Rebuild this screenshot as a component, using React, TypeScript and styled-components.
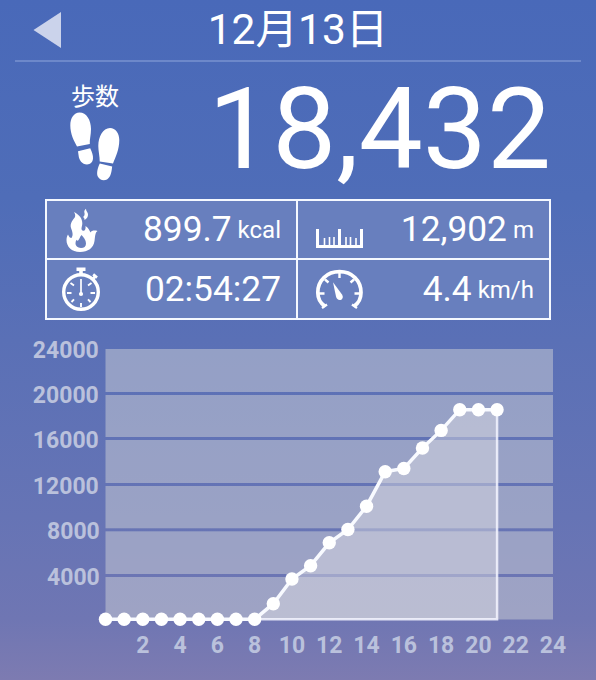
import React from 'react';
import styled, { createGlobalStyle } from 'styled-components';

const GlobalStyle = createGlobalStyle`
  * { box-sizing: border-box; }
  body { margin: 0; }
`;

const Screen = styled.main`
  width: 596px;
  height: 680px;
  overflow: hidden;
  color: #fff;
  font-family: Roboto, 'Noto Sans CJK JP', sans-serif;
  background: linear-gradient(180deg, #4969b9 0%, #4f6db8 29%, #5a70b6 50%, #6674b5 76%, #6f76b3 91%, #7d7bb1 100%);
`;

const Header = styled.header`
  display: grid;
  grid-template-columns: 64px 1fr 64px;
  align-items: center;
  height: 62px;
  margin: 0 15px;
  border-bottom: 2px solid #6d88ca;
`;

const BackButton = styled.button`
  display: flex;
  padding: 0 0 0 18px;
  border: 0;
  background: none;
`;

const Title = styled.h1`
  margin: 0;
  font-size: 42.5px;
  line-height: 60px;
  font-weight: 400;
  text-align: center;
  white-space: nowrap;
`;

const Summary = styled.section`
  display: flex;
  justify-content: space-between;
  height: 137px;
  padding: 0 45px 0 70px;
`;

const StepsBadge = styled.div`
  display: flex;
  flex-direction: column;
  width: 50px;
  padding-top: 21px;
`;

const StepsLabel = styled.span`
  padding-left: 1px;
  font-size: 24px;
  line-height: 29px;
  white-space: nowrap;
`;

const StepsCount = styled.div`
  font-size: 114px;
  line-height: 135px;
`;

const Stats = styled.section`
  display: grid;
  grid-template-columns: 249px 251px;
  grid-template-rows: 57px 58px;
  gap: 2px;
  width: 506px;
  height: 121px;
  margin-left: 45px;
  padding: 2px;
  background: #f4f8ff;
`;

const Stat = styled.div`
  display: flex;
  align-items: center;
  justify-content: space-between;
  padding: 0 15px 0 14px;
  background: #687fbe;

  &:nth-child(even) {
    padding-left: 17px;
  }
`;

const Reading = styled.div`
  display: flex;
  align-items: baseline;
  gap: 6px;
  white-space: nowrap;
`;

const Value = styled.span`
  font-size: 35.3px;
  line-height: 57px;
`;

const Unit = styled.span`
  font-size: 24px;
  position: relative;
  top: -3px;
`;

const ChartArea = styled.svg`
  display: block;
  width: 596px;
  height: 360px;
  font-family: Roboto, sans-serif;
`;

const AxisLabel = styled.text`
  fill: #bac1dc;
  font-size: 23px;
  font-weight: 700;
`;

const Footprints = () => (
  <svg width="51" height="70" viewBox="70 112 51 70" fill="#fff">
    <path d="M77 146.500C74 141 70.300 134 70.300 125.500C70.300 118 74 112.500 79.500 112.500C86.500 112.500 91 120 91 129C91 135 89.500 139 89.800 144Z" />
    <path d="M78 151.200L90.200 148.200C92 152 93.300 155.500 93 158.500C92.700 162 90.500 164.300 87 164.500C82 164.500 79 160 78.600 155.500Z" />
    <path d="M99.700 161.500C99.800 156.500 98.300 151 98.300 146C98.300 136.500 103 128 110 128C115.500 128 119.300 133 119.300 140C119.300 149.500 115.500 157 113 163.500Z" />
    <path d="M99.800 163.400L112.200 166.500C111.500 171.500 111.200 176.500 107 179.500C103.500 181.200 99.500 180 97.800 176.500C96.200 173 97.800 167.500 99.800 163.400Z" />
  </svg>
);

const Flame = () => (
  <svg width="40" height="46" viewBox="61 207 40 46">
    <path fill="#fff" d="M74 212C79 214.500 82.500 218.500 82.300 223.500C82.200 227 80.500 229 82.500 230.500C84.500 231.500 86 229.500 85.500 226C88.500 228 89.500 230.500 90.500 232.500C91.500 230.500 94.500 230 97.500 231C95 232.500 95.200 236.500 94.500 241C93.500 248 88 252 80 252C71.500 252 66.500 246.500 66.500 240C66.500 238 67 236 68 234.500C69 237 70 238 71.500 238C73.500 235 72.500 232 71 228C69.500 223 73.500 219.500 75 217C75.500 215 75 213.500 74 212ZM83 217C84.500 216 84.800 214.500 84.500 213C83.900 211.500 84.400 209.700 86 208.700C85.800 211 87.800 212 88 214C88.300 217 86.500 219 84.500 220C84.700 218.500 84 217.500 83 217Z" />
    <path fill="#687fbe" d="M81.500 235C83.500 237 86 240 86 243.500C86 246.500 84 248 81 248C77.500 248 75.500 245.800 75.500 243.300C75.500 242 75.800 240.800 76.500 239.800C77.500 241 78 240.800 78.500 240C80 238.500 79.500 237 81.500 235Z" />
  </svg>
);

const Stopwatch = () => (
  <svg width="40" height="46" viewBox="61 266 40 46" stroke="#fff" fill="none">
    <circle cx="81" cy="292" r="17.300" strokeWidth="3.400" />
    <path d="M76.500 269.300H85.500M81 270V276" strokeWidth="3.600" />
    <path d="M92 280L95 276.500M93.200 274.400L97 277.600" strokeWidth="2.700" />
    <path d="M81 279V293" strokeWidth="1.700" />
    <path d="M67 293H71.500M90.500 293H95M70.500 283L74 285.500M91.500 283L88 285.500M71.500 302L74 299.300M90.500 302L88 299.300M81 303V307" strokeWidth="1.900" />
    <circle cx="81" cy="294" r="2.100" fill="#fff" stroke="none" />
  </svg>
);

const Ruler = () => (
  <svg width="50" height="40" viewBox="315 210 50 40" stroke="#fff" fill="none">
    <path d="M317.500 229V246.500H361.500V229M339.500 229V247" strokeWidth="3" />
    <path d="M324.500 238V246M329.500 237V246M334 237V246M346 237V246M350.500 237V246M356 238V246" strokeWidth="1.600" />
  </svg>
);

const Gauge = () => (
  <svg width="50" height="46" viewBox="315 266 50 46" stroke="#fff" fill="none">
    <path d="M325 306.200C320 303 317.800 298.500 317.800 292.500C317.800 280.500 327 271.700 339.500 271.700C352 271.700 361 280.500 361 292.500C361 298.500 359 303 354 306.200" strokeWidth="3.700" />
    <path d="M322 308L327 304.500M357 308L352 304.500" strokeWidth="2.400" />
    <path d="M339.500 273V278M319 293.500H324.500M354.500 293.500H360M325 279.500L328.500 282.500M354 279.500L350.500 282.500" strokeWidth="2.400" />
    <path d="M333 282.300L342 294.500C343.500 297 342.700 299.300 340.500 300C338.300 300.500 336.600 298.800 336 296.500Z" fill="#fff" stroke="none" />
  </svg>
);

const LEFT = 105.5;
const RIGHT = 553;
const TOP = 349;
const BASE = 619.3;
const HOUR = (RIGHT - LEFT) / 24;

const yTicks = [
  { label: '24000', y: 349 },
  { label: '20000', y: 393.5 },
  { label: '16000', y: 438.5 },
  { label: '12000', y: 484.5 },
  { label: '8000', y: 529.8 },
  { label: '4000', y: 575.5 },
];
const heights = [
  619.3, 619.3, 619.3, 619.3, 619.3, 619.3, 619.3, 619.3, 619.3, 603.7, 579, 565.7, 542.8,
  529.5, 506.2, 471.7, 468.5, 448, 430.4, 409.7, 409.7, 409.7,
];
const points = heights.map((y, i) => ({ x: LEFT + HOUR * i, y }));
const line = points.map((p) => `${p.x},${p.y}`).join(' ');
const lastX = points[points.length - 1].x;

const StepsChart = () => (
  <ChartArea viewBox="0 320 596 360">
    {yTicks.map((tick, i) => {
      const top = i === 0 ? TOP : tick.y + 1.5;
      const bottom = i === yTicks.length - 1 ? 619.5 : yTicks[i + 1].y - 1.5;
      return (
        <rect key={tick.label} x={LEFT} y={top} width={RIGHT - LEFT} height={bottom - top} fill="#ced0d6" fillOpacity={0.5} />
      );
    })}
    <polygon points={`${line} ${lastX},${BASE}`} fill="#d9d9e1" fillOpacity={0.48} />
    <path d={`M${points[8].x} ${BASE}H${lastX}V409.700`} fill="none" stroke="#f3f4ff" strokeOpacity={0.85} strokeWidth={2.5} />
    <polyline points={line} fill="none" stroke="#f8faff" strokeWidth={3.5} />
    {points.map((p) => (
      <circle key={p.x} cx={p.x} cy={p.y} r={6.7} fill="#fff" />
    ))}
    {yTicks.map((tick) => (
      <AxisLabel key={tick.label} x={tick.label.length < 5 ? 99.8 : 98.8} y={tick.y + 9.3} textAnchor="end">{tick.label}</AxisLabel>
    ))}
    {Array.from({ length: 12 }, (_, i) => (i + 1) * 2).map((hour) => (
      <AxisLabel key={hour} x={LEFT + HOUR * hour} y={653} textAnchor="middle">{hour}</AxisLabel>
    ))}
  </ChartArea>
);

export default function App() {
  return (
    <Screen>
      <GlobalStyle />
      <Header>
        <BackButton aria-label="前の日">
          <svg width="28" height="36" viewBox="0 0 28 36">
            <path d="M0.500 18L28 0V36Z" fill="#cbd3eb" />
          </svg>
        </BackButton>
        <Title>12月13日</Title>
      </Header>
      <Summary>
        <StepsBadge>
          <StepsLabel>歩数</StepsLabel>
          <Footprints />
        </StepsBadge>
        <StepsCount>18,432</StepsCount>
      </Summary>
      <Stats>
        <Stat>
          <Flame />
          <Reading><Value>899.7</Value><Unit>kcal</Unit></Reading>
        </Stat>
        <Stat>
          <Ruler />
          <Reading><Value>12,902</Value><Unit>m</Unit></Reading>
        </Stat>
        <Stat>
          <Stopwatch />
          <Reading><Value>02:54:27</Value></Reading>
        </Stat>
        <Stat>
          <Gauge />
          <Reading><Value>4.4</Value><Unit>km/h</Unit></Reading>
        </Stat>
      </Stats>
      <StepsChart />
    </Screen>
  );
}
